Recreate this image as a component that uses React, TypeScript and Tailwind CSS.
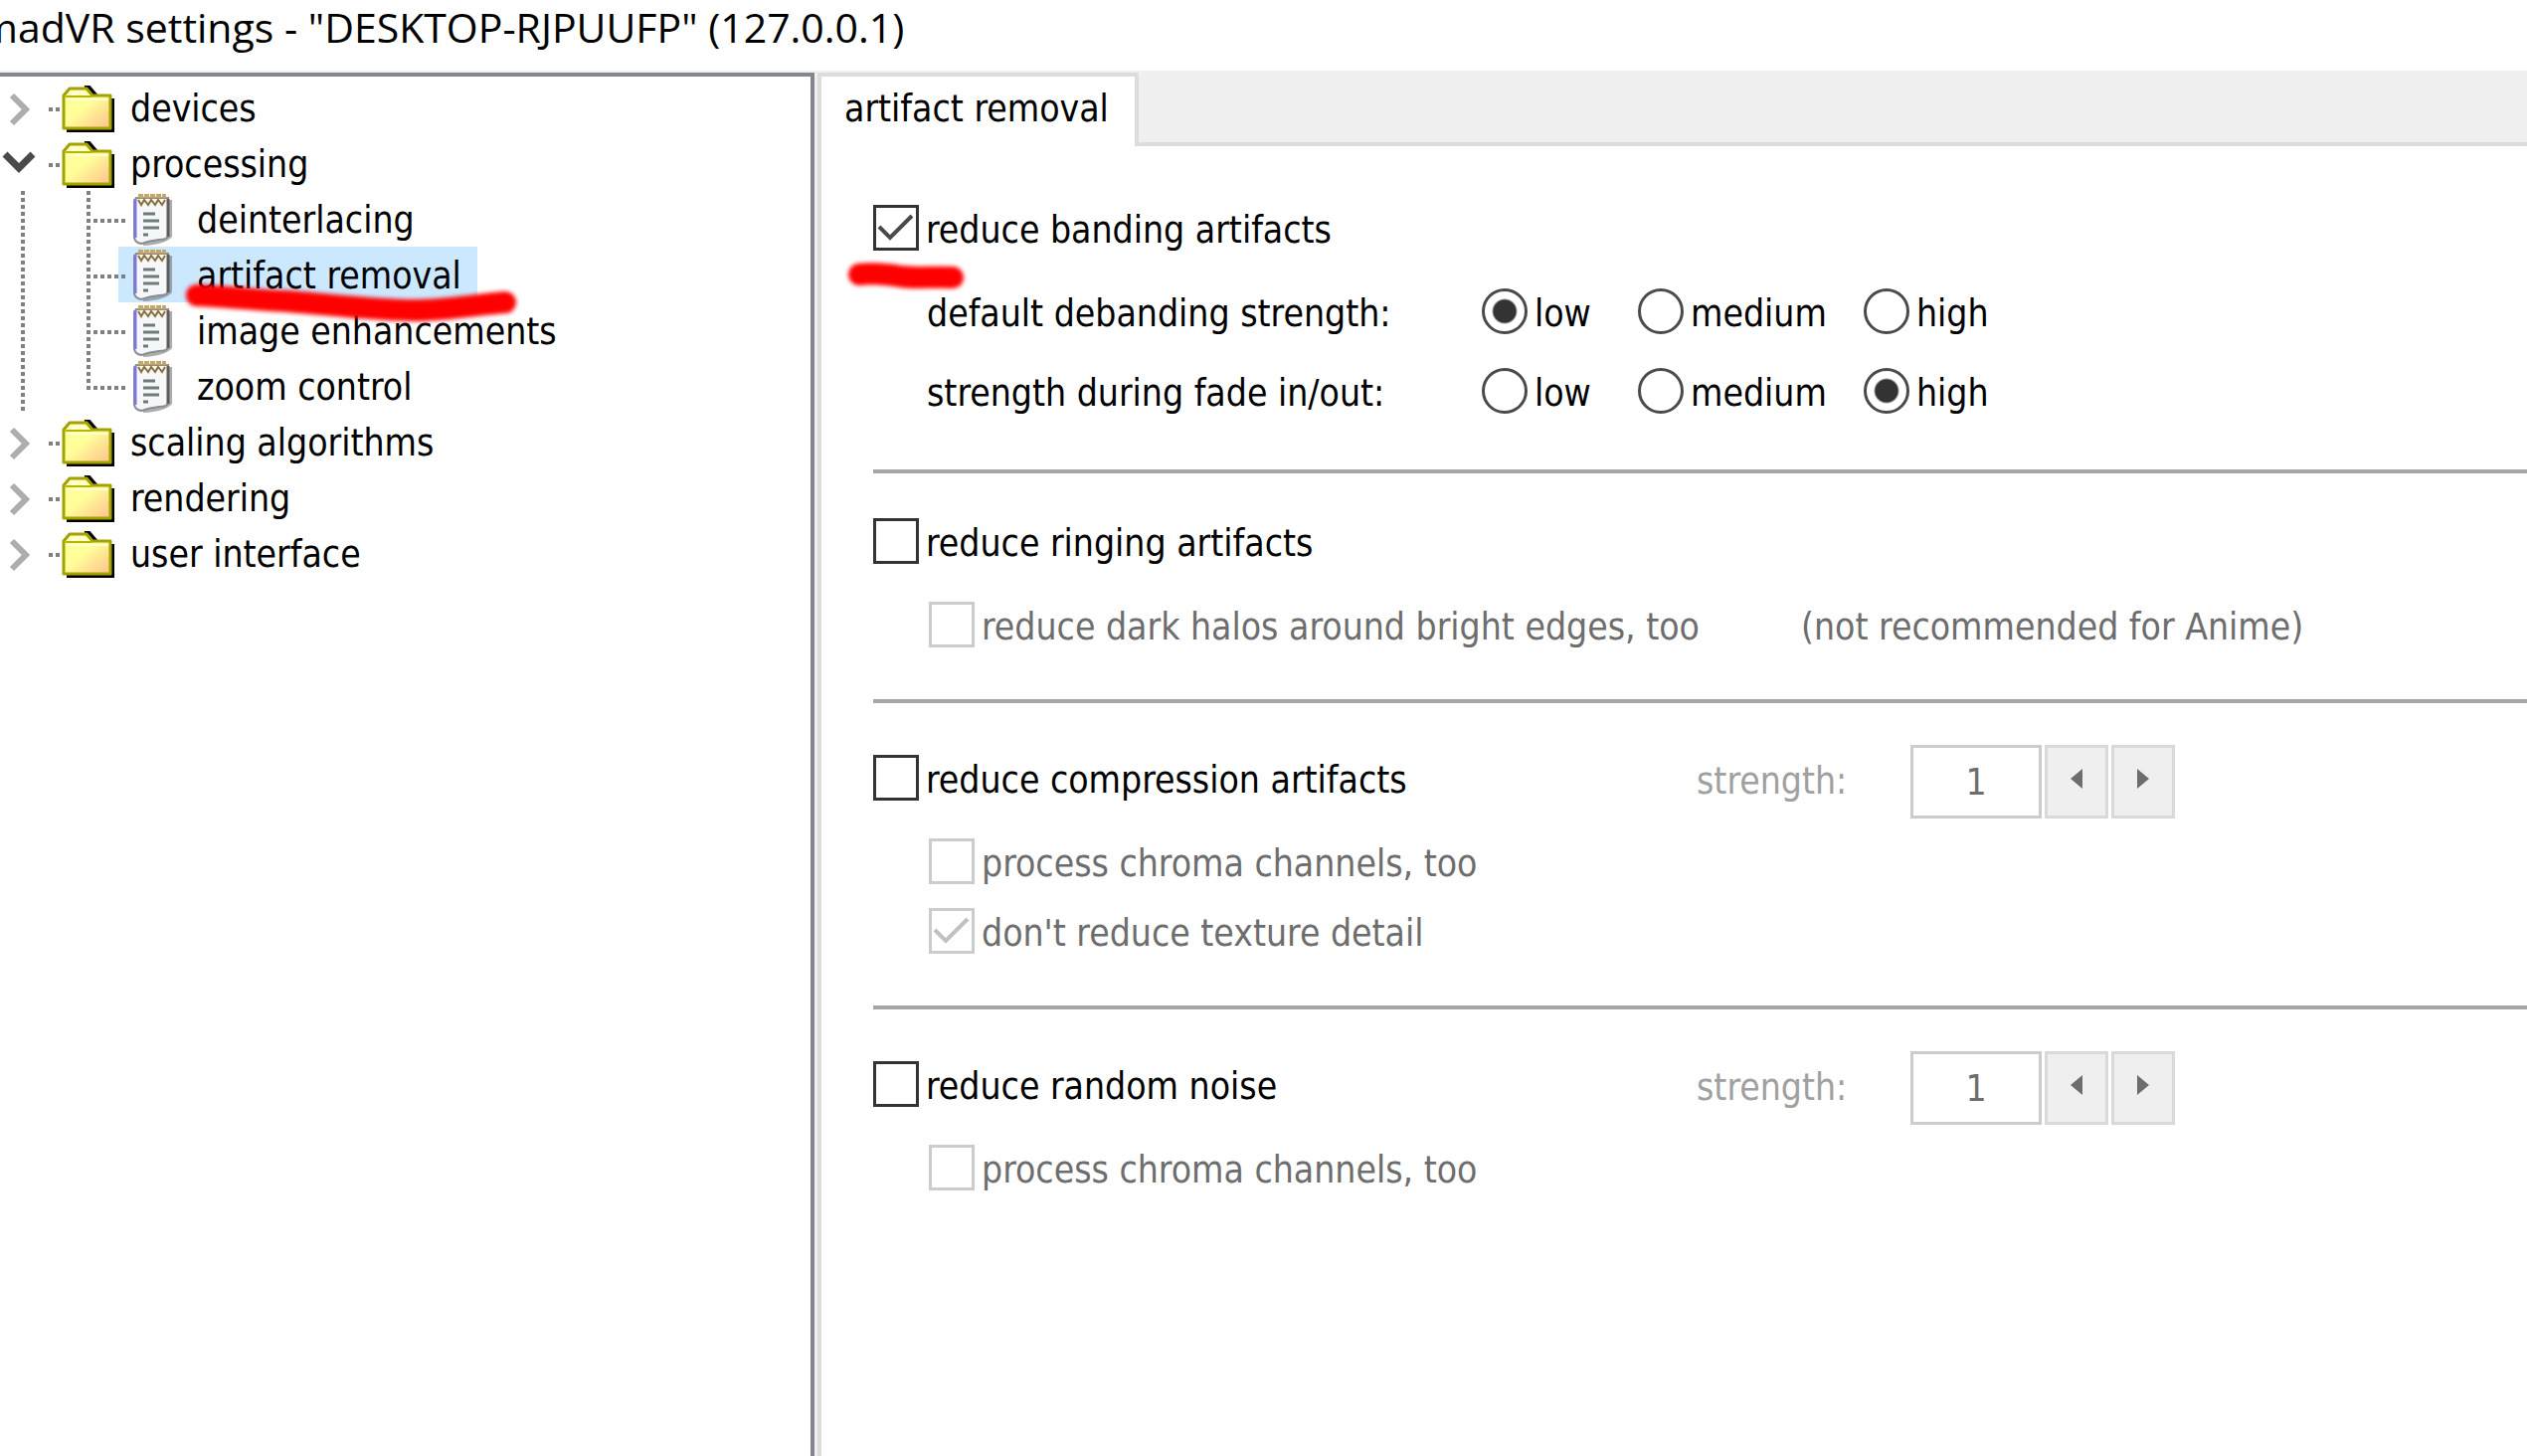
import { useState } from 'react';
import type { ReactNode } from 'react';

const folders = [
  { name: 'devices' },
  { name: 'processing', pages: ['deinterlacing', 'artifact removal', 'image enhancements', 'zoom control'] },
  { name: 'scaling algorithms' },
  { name: 'rendering' },
  { name: 'user interface' },
];

function Chevron({ open }: { open?: boolean }) {
  return (
    <svg viewBox="0 0 49 56" className="h-14 w-[49px] shrink-0" fill="none" strokeWidth="6" aria-hidden="true">
      {open ? <path d="M5 19 L19 33 L33 19" stroke="#4a4a4a" strokeWidth="7" /> : <path d="M12 16 L26 30 L12 44" stroke="#adadad" />}
    </svg>
  );
}

function FolderIcon() {
  return (
    <svg viewBox="0 0 67 56" className="h-14 w-[67px] shrink-0" aria-hidden="true">
      <defs>
        <linearGradient id="folder" x1="0" y1="0" x2="1" y2="1">
          <stop offset="0.45" stopColor="#ffff99" />
          <stop offset="1" stopColor="#ffc08c" />
        </linearGradient>
      </defs>
      <path d="M0 30h4M7 30h4" stroke="#808080" strokeWidth="4" />
      <path d="M18 19h48v34H18z" fill="#000" />
      <path d="M37 7h4l6 7h-8z" fill="#000" stroke="#000" strokeWidth="2" />
      <path d="M15 49V16l6-7h17l6 7h18v33z" fill="url(#folder)" stroke="#a3a300" strokeWidth="3" strokeLinejoin="round" />
      <path d="M22 11h14l4 5H18z" fill="#ffffcc" />
      <path d="M17 17h27" stroke="#b5b500" strokeWidth="2" />
      <path d="M17 20h43" stroke="#ffffd2" strokeWidth="2" />
    </svg>
  );
}

function NotepadIcon() {
  return (
    <svg viewBox="0 0 48 56" className="h-14 w-12 shrink-0" aria-hidden="true">
      <path d="M11 9H43V46Q36 54 14 55Z" fill="#777777" opacity="0.6" />
      <path d="M7 7H39V45Q38 49 30 49Q20 50 12 53Q6 52 5 47V10Z" fill="#f5f7f8" stroke="#8c8c94" strokeWidth="2" />
      <path d="M6 8V47" stroke="#7d78d8" strokeWidth="3" />
      <path d="M39 8V46" stroke="#5c5c5c" strokeWidth="3" />
      <path d="M9 5H37" stroke="#c9a55e" strokeWidth="4" strokeDasharray="5 1" />
      <path d="M9 9l3 5 3-5 4 5 3-5 4 5 3-5 4 5 3-5" stroke="#8a6f3c" strokeWidth="2" fill="none" />
      <path d="M14 23h12M14 30h16M14 37h16M14 44h5" stroke="#6f7a7a" strokeWidth="3" />
    </svg>
  );
}

function Branch({ last }: { last: boolean }) {
  return (
    <svg viewBox="0 0 119 56" className="relative h-14 w-[119px] shrink-0 overflow-visible" stroke="#808080" strokeWidth="4" strokeDasharray="4 3" aria-hidden="true">
      <path d="M23 0V56" />
      <path d={last ? 'M89 0V32' : 'M89 0V56'} />
      <path d="M94 30H127" />
    </svg>
  );
}

function Marker({ d, className }: { d: string; className: string }) {
  return (
    <svg className={`pointer-events-none absolute z-10 overflow-visible blur-[2px] ${className}`} fill="none" stroke="#ff0000" strokeWidth="22" strokeLinecap="round" strokeLinejoin="round" aria-hidden="true">
      <path d={d} />
    </svg>
  );
}

function Check({ label, disabled, defaultChecked }: { label: string; disabled?: boolean; defaultChecked?: boolean }) {
  return (
    <label className={`flex h-[46px] w-fit items-center gap-[7px] whitespace-nowrap ${disabled ? 'text-[#6d6d6d]' : ''}`}>
      <span className="grid shrink-0">
        <input
          type="checkbox"
          disabled={disabled}
          defaultChecked={defaultChecked}
          className="peer col-start-1 row-start-1 size-[46px] appearance-none border-3 border-[#333333] bg-white disabled:border-[#cccccc]"
        />
        <svg viewBox="0 0 46 46" className="pointer-events-none invisible col-start-1 row-start-1 size-[46px] text-[#4a4a4a] peer-checked:visible peer-disabled:text-[#c0c0c0]" fill="none" stroke="currentColor" strokeWidth="4" aria-hidden="true">
          <path d="M6 22L17 33L39 11" />
        </svg>
      </span>
      <span className="pt-1.5">{label}</span>
    </label>
  );
}

function Strengths({ label, name, value }: { label: string; name: string; value: string }) {
  return (
    <div role="radiogroup" aria-label={label} className="grid h-[46px] grid-cols-[558px_157px_227px_auto] items-center justify-start pl-[54px]">
      <span className="pt-1.5">{label}</span>
      {['low', 'medium', 'high'].map((s) => (
        <label key={s} className="flex items-center gap-[7px]">
          <input
            type="radio"
            name={name}
            defaultChecked={s === value}
            className="size-[46px] shrink-0 appearance-none rounded-full border-3 border-[#4a4a4a] bg-white checked:bg-[radial-gradient(circle,#333333_11px,transparent_13px)]"
          />
          <span className="pt-1.5">{s}</span>
        </label>
      ))}
    </div>
  );
}

function Spinner({ id }: { id: string }) {
  return (
    <div className="-mt-2.5 flex h-[74px] items-center">
      <label htmlFor={id} className="w-[215px] text-[#a0a0a0]">strength:</label>
      <input id={id} defaultValue="1" disabled className="h-full w-[132px] border-3 border-[#cccccc] bg-white text-center text-[#6d6d6d]" />
      <div className="ml-[3px] flex h-full gap-[3px]">
        <button type="button" disabled aria-label="decrease" className="flex w-16 items-center justify-center border-3 border-[#d9d9d9] bg-[#efefef] pb-1.5">
          <svg viewBox="0 0 12 20" className="h-5 w-3" fill="#6d6d6d"><path d="M12 0V20L0 10Z" /></svg>
        </button>
        <button type="button" disabled aria-label="increase" className="flex w-16 items-center justify-center border-3 border-[#d9d9d9] bg-[#efefef] pb-1.5">
          <svg viewBox="0 0 12 20" className="h-5 w-3" fill="#6d6d6d"><path d="M0 0V20L12 10Z" /></svg>
        </button>
      </div>
    </div>
  );
}

function Section({ children, className = 'py-[52px]' }: { children: ReactNode; className?: string }) {
  return <section className={`border-b-4 border-[#a6a6a6] last:border-b-0 ${className}`}>{children}</section>;
}

export default function App() {
  const [selected, setSelected] = useState('artifact removal');

  return (
    <div className="flex min-h-screen flex-col overflow-hidden bg-white font-['DejaVu_Sans_Condensed','DejaVu_Sans',sans-serif] text-[37px] leading-10 text-black">
      <header className="h-[71px] overflow-hidden">
        <h1 className="-ml-5 font-['Open_Sans','Noto_Sans',sans-serif] text-[41px] leading-[54px] whitespace-nowrap">
          madVR settings - "DESKTOP-RJPUUFP" (127.0.0.1)
        </h1>
      </header>

      <div className="flex flex-1 gap-[3px] bg-[#f0f0f0]">
        {/* settings tree */}
        <nav className="mt-0.5 w-[819px] shrink-0 border-t-4 border-r-4 border-[#82878f] bg-white pt-[3px]">
          <ul>
            {folders.map((f) => (
              <li key={f.name}>
                <button type="button" className="flex h-14 items-center">
                  <Chevron open={!!f.pages} />
                  <FolderIcon />
                  <span className="pt-1 pl-[15px]">{f.name}</span>
                </button>
                {f.pages && (
                  <ul>
                    {f.pages.map((p, i) => (
                      <li key={p} className="relative">
                        <button type="button" onClick={() => setSelected(p)} className="flex h-14 items-center">
                          <Branch last={i === f.pages.length - 1} />
                          <span className={`flex h-14 items-center pr-4 pl-[11px] ${p === selected ? 'bg-[#cce8ff]' : ''}`}>
                            <NotepadIcon />
                            <span className="pt-1 pl-5">{p}</span>
                          </span>
                        </button>
                        {p === 'artifact removal' && (
                          <Marker className="top-9 left-45 h-10 w-[350px]" d="M18 13C60 15 80 18 110 19C160 23 200 28 236 28C270 28 300 22 328 20" />
                        )}
                      </li>
                    ))}
                  </ul>
                )}
              </li>
            ))}
          </ul>
        </nav>

        {/* page */}
        <main className="flex min-w-0 flex-1 flex-col">
          <div role="tablist" className="flex pt-0.5">
            <button type="button" role="tab" aria-selected="true" className="h-[74px] w-[323px] border-4 border-b-0 border-[#dcdcdc] bg-white pb-1 pl-[23px] text-left whitespace-nowrap">
              {selected}
            </button>
            <div className="flex-1 border-b-4 border-[#dcdcdc]" />
          </div>

          <div className="flex-1 border-l-4 border-[#dcdcdc] bg-white pt-[7px] pl-[52px]">
            <Section className="pt-[52px] pb-14">
              <div className="relative">
                <Check label="reduce banding artifacts" defaultChecked />
                <Marker className="top-[58px] -left-7 h-8 w-32" d="M14 12C30 10 44 12 56 14C70 16 90 14 108 15" />
              </div>
              <div className="flex flex-col gap-[34px] pt-[38px]">
                <Strengths label="default debanding strength:" name="default" value="low" />
                <Strengths label="strength during fade in/out:" name="fade" value="high" />
              </div>
            </Section>

            <Section className="pt-[45px] pb-[52px]">
              <Check label="reduce ringing artifacts" />
              <div className="flex pt-[38px] pl-14 text-[#6d6d6d]">
                <div className="w-[877px]">
                  <Check label="reduce dark halos around bright edges, too" disabled />
                </div>
                <span className="pt-1.5">(not recommended for Anime)</span>
              </div>
            </Section>

            <Section>
              <div className="flex h-[46px]">
                <div className="w-[828px]">
                  <Check label="reduce compression artifacts" />
                </div>
                <Spinner id="compression-strength" />
              </div>
              <div className="flex flex-col gap-6 pt-[38px] pl-14">
                <Check label="process chroma channels, too" disabled />
                <Check label="don't reduce texture detail" disabled defaultChecked />
              </div>
            </Section>

            <Section>
              <div className="flex h-[46px]">
                <div className="w-[828px]">
                  <Check label="reduce random noise" />
                </div>
                <Spinner id="noise-strength" />
              </div>
              <div className="pt-[38px] pl-14">
                <Check label="process chroma channels, too" disabled />
              </div>
            </Section>
          </div>
        </main>
      </div>
    </div>
  );
}
